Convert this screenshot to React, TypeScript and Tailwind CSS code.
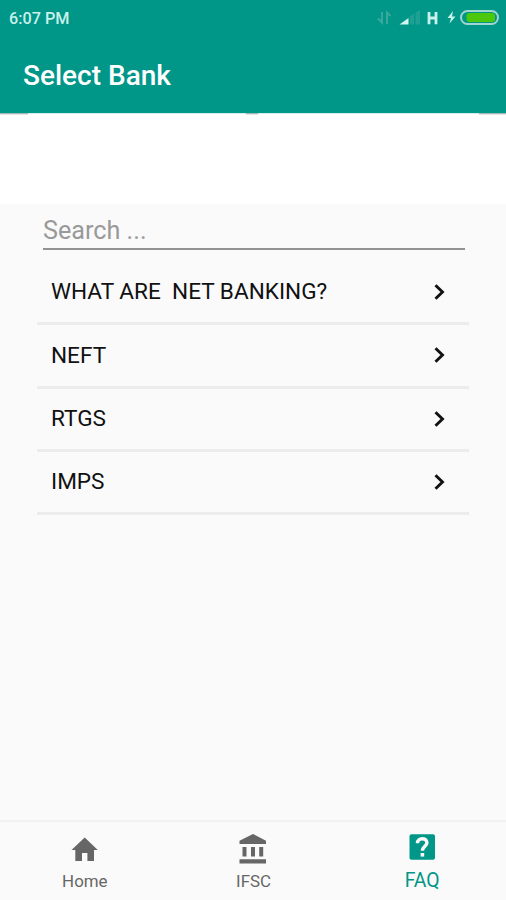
import type { ReactNode } from 'react';

const questions = ['WHAT ARE  NET BANKING?', 'NEFT', 'RTGS', 'IMPS'];

function StatusBar() {
  return (
    <div className="flex h-9 items-center justify-between pl-[9px] pr-[7px]">
      <span className="mt-[2px] whitespace-nowrap text-[16.200px] font-medium leading-none text-[#c9f1ec]">6:07 PM</span>
      <svg className="h-9 w-[124px]" viewBox="375 0 124 36" fill="none">
        <path d="M378 18.500L382 22.500V12M390.500 16L387 12.500V24" stroke="#3aa99d" strokeWidth="2" />
        <path d="M399.500 24.500L408.500 18V24.500Z" fill="#d5f5f1" />
        <path d="M410 24.500V16L414 13.500V24.500ZM415.500 24.500V12.500L420 10V24.500Z" fill="#1fa093" />
        <path d="M429 12V24.300M436 12V24.300M429 18H436" stroke="#c9f1ec" strokeWidth="2.800" />
        <path d="M453 11L447.500 18H451L449.500 23.500L455.500 16.500H452Z" fill="#c9f1ec" />
        <rect x="461" y="11" width="37" height="13" rx="6.500" stroke="#a0d5d0" strokeWidth="2" />
        <rect x="466.500" y="13" width="28.500" height="9" rx="3" fill="#4cc70b" />
      </svg>
    </div>
  );
}

function NavItem({ label, active = false, children }: { label: string; active?: boolean; children: ReactNode }) {
  return (
    <div className={`flex flex-1 flex-col items-center pt-[11px] ${active ? 'text-[#009688]' : 'text-[#666666]'}`}>
      <svg className="h-8 w-8 shrink-0" viewBox="0 0 32 32" fill="currentColor">
        {children}
      </svg>
      <span className={`ml-px mt-1 whitespace-nowrap leading-6 ${active ? 'text-[19.400px]' : 'text-[16.900px]'}`}>{label}</span>
    </div>
  );
}

export default function App() {
  return (
    <div className="flex h-[900px] w-[506px] flex-col overflow-hidden bg-[#fafafa] font-['Roboto',sans-serif]">
      <header className="h-[113px] shrink-0 bg-[#009688]">
        <StatusBar />
        <h1 className="pl-[23px] pt-6 text-[28px] font-medium leading-8 text-white">Select Bank</h1>
      </header>
      <div className="h-[91px] shrink-0 bg-white">
        <div className="flex h-px bg-[#d0ece9]">
          <span className="w-7 bg-[#9fbab7]" />
          <span className="ml-[218px] w-3 bg-[#9fbab7]" />
          <span className="ml-auto w-[27px] bg-[#9fbab7]" />
        </div>
        <div className="flex h-px">
          <span className="w-7 bg-[#e6e6e6]" />
          <span className="ml-[218px] w-3 bg-[#e6e6e6]" />
          <span className="ml-auto w-[27px] bg-[#e6e6e6]" />
        </div>
      </div>
      <main className="flex-1">
        <div className="ml-[43px] mr-[41px] h-[46px] border-b-2 border-[#929292] pt-[11px] text-[25.200px] leading-8 text-[#999999]">
          Search ...
        </div>
        <ul className="mx-[37px] mt-[12px]">
          {questions.map((question) => (
            <li
              key={question}
              className="flex h-[63.300px] items-center justify-between border-b-3 border-[#ececec] pl-[14px] pr-[24px] text-[22.600px] text-[#111111]"
            >
              <span className="whitespace-pre">{question}</span>
              <svg className="h-4 w-[11px]" viewBox="0 0 11 16" fill="none">
                <path d="M1.500 1.200L8.500 8L1.500 14.800" stroke="#111111" strokeWidth="2.900" />
              </svg>
            </li>
          ))}
        </ul>
      </main>
      <nav className="flex h-20 shrink-0 border-t-2 border-[#f1f1f1]">
        <NavItem label="Home">
          <path d="M14 28V20H19.400V28H26V17H29.800L16.700 4.500L3.500 17H7.300V28Z" />
        </NavItem>
        <NavItem label="IFSC">
          <path d="M2.500 7.800L16 1L29 7.800V11H2.500ZM5.500 14H9.500V23.500H5.500ZM14 14H18V23.500H14ZM22.200 14H26.200V23.500H22.200ZM2.500 26.300H29V30.500H2.500Z" />
        </NavItem>
        <NavItem label="FAQ" active>
          <rect x="3.500" y="1.300" width="25.500" height="25.500" rx="2" />
          <path d="M11.500 10.200C11.500 4.300 20.900 4.300 20.900 9.800C20.900 13 16.400 13.700 16.400 17.800" fill="none" stroke="#fafafa" strokeWidth="3.500" />
          <rect x="14.600" y="20" width="3.600" height="3.600" fill="#fafafa" />
        </NavItem>
      </nav>
    </div>
  );
}
